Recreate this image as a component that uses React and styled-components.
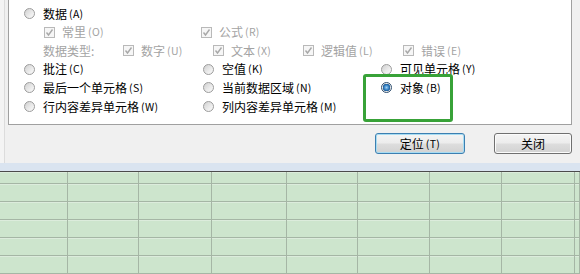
import React from "react";
import styled, { createGlobalStyle } from "styled-components";

const Global = createGlobalStyle`
  html, body { margin: 0; padding: 0; background: #f0f0f0; }
  body { font-family: "Noto Sans CJK SC", "Noto Sans", sans-serif; }
`;

const Page = styled.div`
  width: 580px;
  height: 274px;
  overflow: hidden;
  display: flex;
  flex-direction: column;
`;

const Dialog = styled.div`
  height: 163px;
  background: #f0f0f0;
  box-shadow: inset 4px 0 0 #f4f4f4, inset 5px 0 0 #dcdcdc;
  padding: 0 8px;
  box-sizing: border-box;
  display: flex;
  flex-direction: column;
`;

const Panel = styled.div`
  position: relative;
  height: 125px;
  box-sizing: border-box;
  background: #fff;
  border: 1px solid #a0a0a0;
  border-top: none;
  padding-top: 4px;
  display: grid;
  grid-template-rows: 19px 18px 19px 18px 19px 19px;
  align-content: start;
`;

const Row = styled.div`
  display: flex;
  align-items: center;
  padding-left: ${(p) => p.$indent}px;
`;

const Cell = styled.div`
  display: flex;
  align-items: center;
  flex: 0 0 ${(p) => (p.$w ? `${p.$w}px` : "auto")};
  font-size: 12px;
  line-height: 14px;
  white-space: nowrap;
  color: ${(p) => (p.$disabled ? "#a3a3a3" : "#000")};
`;

const Key = styled.span`
  font-size: 10.5px;
  margin-left: 2px;
  letter-spacing: 0.3px;
`;

const RadioDot = styled.span`
  flex: 0 0 auto;
  width: 11px;
  height: 11px;
  border-radius: 50%;
  box-sizing: border-box;
  margin-right: 8px;
  border: 1px solid ${(p) => (p.$on ? "#2f4f70" : "#9c9c9c")};
  background: ${(p) =>
    p.$on
      ? "radial-gradient(circle at 50% 50%, #9fd0f5 0, #2f7cc0 2.5px, #1d5a96 3.5px, #e8e8e8 4px, #f8f8f8 100%)"
      : "linear-gradient(135deg, #d0d0d0 0%, #ececec 60%, #fafafa 100%)"};
`;

const Check = styled.span`
  flex: 0 0 auto;
  width: 11px;
  height: 11px;
  box-sizing: border-box;
  margin-right: 7px;
  border: 1px solid #b9b9b9;
  background: #f6f6f6;
  display: flex;
  align-items: center;
  justify-content: center;
`;

const Highlight = styled.div`
  position: absolute;
  left: 354px;
  top: 74px;
  width: 90px;
  height: 48px;
  box-sizing: border-box;
  border: 3px solid #38a238;
  border-radius: 3px;
`;

const ButtonBar = styled.div`
  display: flex;
  justify-content: flex-end;
  gap: 29px;
  margin-top: 8px;
`;

const Button = styled.div`
  width: ${(p) => p.$w}px;
  height: 21px;
  box-sizing: border-box;
  border-radius: 3px;
  border: 1px solid ${(p) => (p.$default ? "#3c7fb1" : "#707070")};
  box-shadow: inset 0 0 0 1px ${(p) => (p.$default ? "#a8dcf2" : "#fbfbfb")};
  background: linear-gradient(#f4f4f4 0%, #ececec 48%, #dddddd 52%, #d2d2d2 100%);
  display: flex;
  align-items: center;
  justify-content: center;
  font-size: 12px;
  color: #000;
`;

const Strip = styled.div`
  height: 8px;
  background: #dae4f0;
  border-bottom: 1px solid #4b4b4b;
`;

const Sheet = styled.div`
  flex: 1;
  display: grid;
  grid-template-columns: 68px 71px 73px 75px 71px 72px 72px 73px 1fr;
  grid-template-rows: 12px repeat(5, 18px);
  background: #cde5cd;
`;

const SheetCell = styled.div`
  box-sizing: border-box;
  border-right: 1px solid #a5b6a5;
  border-bottom: 1px solid #a5b6a5;
  box-shadow: inset 0 1px 0 #dcecdc;
`;

const CheckMark = () => (
  <svg width="9" height="9" viewBox="0 0 9 9">
    <path d="M1.5 4.5 L3.5 7 L7.5 1.5" fill="none" stroke="#a8a8a8" strokeWidth="1.4" />
  </svg>
);

const Radio = ({ on, label, k, w }) => (
  <Cell $w={w}>
    <RadioDot $on={on} />
    {label}
    <Key>({k})</Key>
  </Cell>
);

const CheckItem = ({ label, k, w }) => (
  <Cell $w={w} $disabled>
    <Check>
      <CheckMark />
    </Check>
    {label}
    <Key>({k})</Key>
  </Cell>
);

export default function App() {
  const cells = [];
  for (let i = 0; i < 54; i++) cells.push(<SheetCell key={i} />);
  return (
    <Page>
      <Global />
      <Dialog>
        <Panel>
          <Row $indent={15}>
            <Radio label="数据" k="A" />
          </Row>
          <Row $indent={35}>
            <CheckItem label="常里" k="O" w={157} />
            <CheckItem label="公式" k="R" />
          </Row>
          <Row $indent={34}>
            <Cell $w={80} $disabled>数据类型:</Cell>
            <CheckItem label="数字" k="U" w={90} />
            <CheckItem label="文本" k="X" w={90} />
            <CheckItem label="逻辑值" k="L" w={100} />
            <CheckItem label="错误" k="E" />
          </Row>
          <Row $indent={15}>
            <Radio label="批注" k="C" w={179} />
            <Radio label="空值" k="K" w={178} />
            <Radio label="可见单元格" k="Y" />
          </Row>
          <Row $indent={15}>
            <Radio label="最后一个单元格" k="S" w={179} />
            <Radio label="当前数据区域" k="N" w={178} />
            <Radio on label="对象" k="B" />
          </Row>
          <Row $indent={15}>
            <Radio label="行内容差异单元格" k="W" w={179} />
            <Radio label="列内容差异单元格" k="M" />
          </Row>
          <Highlight />
        </Panel>
        <ButtonBar>
          <Button $default $w={90}>定位<Key>(T)</Key></Button>
          <Button $w={78}>关闭</Button>
        </ButtonBar>
      </Dialog>
      <Strip />
      <Sheet>{cells}</Sheet>
    </Page>
  );
}
